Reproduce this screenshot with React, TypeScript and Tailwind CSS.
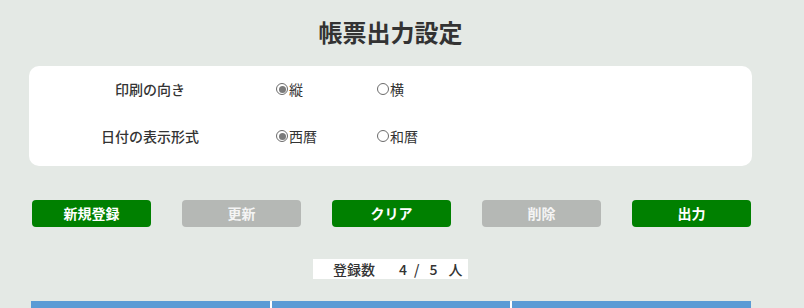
import React, { useState } from "react";

const font = { fontFamily: '"Noto Sans CJK JP", "Noto Sans", sans-serif' };

interface RadioProps {
  checked: boolean;
  label: string;
  onClick: () => void;
}

const Radio: React.FC<RadioProps> = ({ checked, label, onClick }) => (
  <button
    type="button"
    onClick={onClick}
    className="flex items-center text-[14px] text-[#333]"
  >
    <span className="w-[12px] h-[12px] rounded-full border border-[#6b6b6b] bg-white flex items-center justify-center mr-[1px]">
      {checked && <span className="w-[7px] h-[7px] rounded-full bg-[#7a7a7a]" />}
    </span>
    {label}
  </button>
);

export default function App() {
  const [orientation, setOrientation] = useState<"tate" | "yoko">("tate");
  const [era, setEra] = useState<"seireki" | "wareki">("seireki");

  const buttons = [
    { label: "新規登録", active: true },
    { label: "更新", active: false },
    { label: "クリア", active: true },
    { label: "削除", active: false },
    { label: "出力", active: true },
  ];

  return (
    <div className="w-[804px] h-[308px] overflow-hidden bg-[#e4e9e5]" style={font}>
      <div className="w-[781px]">
        {/* Title */}
        <h1 className="pt-[17px] h-[66px] text-center text-[24px] font-bold text-[#333] leading-[30px]">
          帳票出力設定
        </h1>

        {/* Settings card */}
        <div className="mx-[29px] h-[100px] bg-white rounded-[10px] pt-[11px]">
          <div className="flex items-center h-[24px]">
            <div className="w-[242px] text-center text-[14px] font-medium text-[#333]">
              印刷の向き
            </div>
            <div className="w-[101px] ml-[5px]">
              <Radio checked={orientation === "tate"} label="縦" onClick={() => setOrientation("tate")} />
            </div>
            <Radio checked={orientation === "yoko"} label="横" onClick={() => setOrientation("yoko")} />
          </div>
          <div className="flex items-center h-[24px] mt-[23px]">
            <div className="w-[242px] text-center text-[14px] font-medium text-[#333]">
              日付の表示形式
            </div>
            <div className="w-[101px] ml-[5px]">
              <Radio checked={era === "seireki"} label="西暦" onClick={() => setEra("seireki")} />
            </div>
            <Radio checked={era === "wareki"} label="和暦" onClick={() => setEra("wareki")} />
          </div>
        </div>

        {/* Buttons */}
        <div className="flex gap-[31px] pl-[32px] mt-[34px]">
          {buttons.map((b) => (
            <button
              key={b.label}
              type="button"
              className={`w-[119px] h-[27px] rounded-[4px] text-[14px] font-bold ${
                b.active ? "bg-[#008000] text-white" : "bg-[#b5b8b5] text-[#f4f4f4]"
              }`}
            >
              {b.label}
            </button>
          ))}
        </div>

        {/* Count */}
        <div className="flex justify-center mt-[32px]">
          <div className="w-[155px] h-[20px] bg-white flex items-center text-[14px] font-medium text-[#333] pl-[20px]">
            <span>登録数</span>
            <span className="ml-[24px]">4</span>
            <span className="ml-[7px]">/</span>
            <span className="ml-[10px]">5</span>
            <span className="ml-[11px]">人</span>
          </div>
        </div>

        {/* Table header */}
        <div className="flex mt-[22px] ml-[31px] w-[720px] h-[30px] bg-white gap-[2px]">
          <div className="flex-1 bg-[#5b9bd5] text-white text-[14px] font-bold text-center pt-[3px]">氏名</div>
          <div className="flex-1 bg-[#5b9bd5] text-white text-[14px] font-bold text-center pt-[3px]">フリガナ</div>
          <div className="flex-1 bg-[#5b9bd5] text-white text-[14px] font-bold text-center pt-[3px]">所属</div>
        </div>
      </div>
    </div>
  );
}
